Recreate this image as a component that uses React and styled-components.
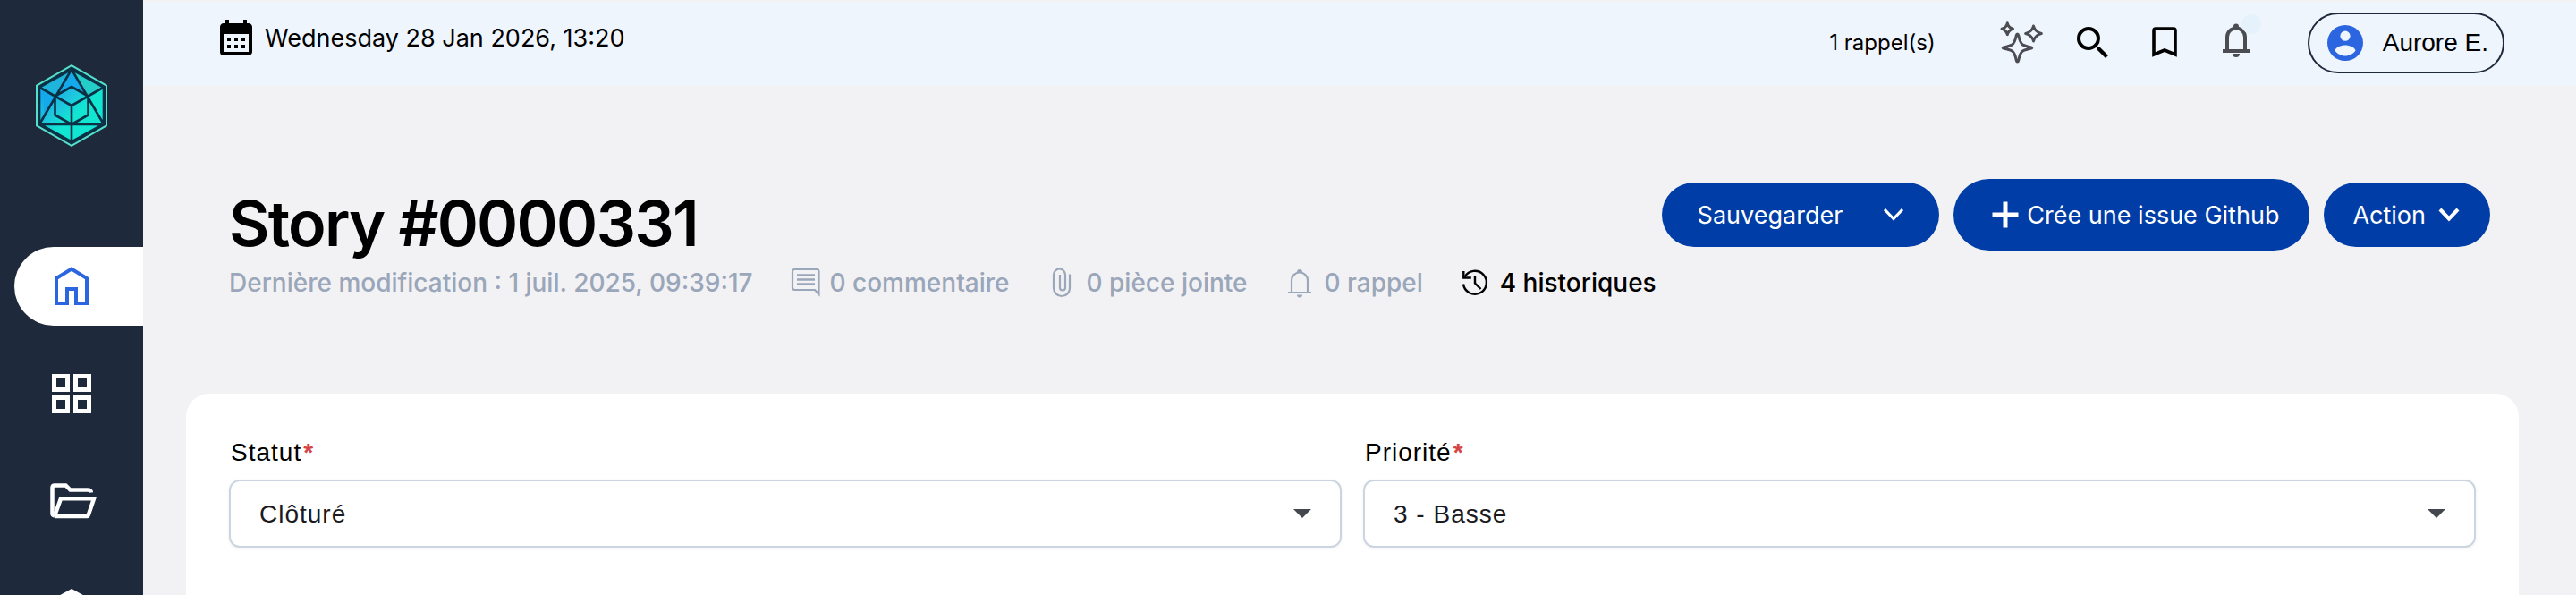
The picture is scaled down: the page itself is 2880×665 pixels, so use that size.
import React from "react";
import styled, { createGlobalStyle } from "styled-components";

const sans = '"Inter", "Liberation Sans", sans-serif';
const helvetica = '"Liberation Sans", Arial, sans-serif';

const GlobalStyle = createGlobalStyle`
  *, *::before, *::after { box-sizing: border-box; }
  body { margin: 0; background: #f2f2f4; color: #000; font-family: ${sans}; font-size: 27px; }
  button, select { font: inherit; color: inherit; letter-spacing: inherit; }
  svg { display: block; flex: none; }
`;

const Shell = styled.div`
  display: flex;
  height: 100vh;
  overflow: hidden;
`;

const Sidebar = styled.aside`
  flex: none;
  width: 160px;
  background: #1e293b;
`;

const LogoLink = styled.a`
  display: flex;
  justify-content: center;
  padding: 72px 0 112px;
`;

const Nav = styled.nav`
  display: flex;
  flex-direction: column;
  gap: 32px;
  padding-left: 16px;
`;

const NavLink = styled.a`
  display: flex;
  flex: none;
  align-items: center;
  height: 88px;
  padding-left: 36px;
  border-radius: 44px 0 0 44px;
  background: ${(p) => (p.$active ? "#fff" : "transparent")};
  color: ${(p) => (p.$active ? "#2b65e0" : "#fff")};
`;

const Page = styled.div`
  display: flex;
  flex: 1;
  flex-direction: column;
  min-width: 0;
`;

const TopBar = styled.header`
  display: flex;
  justify-content: space-between;
  align-items: flex-start;
  padding: 12px 80px 14px;
  border-top: 2px solid #f2f2f4;
  background: #eff5fd;
`;

const DateBox = styled.div`
  display: flex;
  align-items: center;
  gap: 8px;
  padding-top: 4px;
`;

const Tools = styled.div`
  display: flex;
  align-items: center;
`;

const Reminder = styled.span`
  margin-right: 72px;
  font-size: 24px;
  line-height: 32px;
`;

const ToolRow = styled.div`
  display: flex;
  gap: 32px;
  margin-right: 56px;
`;

const IconButton = styled.button`
  position: relative;
  padding: 0;
  border: 0;
  background: none;
  color: ${(p) => (p.$soft ? "#4b4d52" : "#000")};
`;

const Badge = styled.span`
  position: absolute;
  top: -8px;
  right: -4px;
  width: 22px;
  height: 22px;
  border-radius: 50%;
  background: #e5f2fb;
`;

const UserButton = styled.button`
  display: flex;
  align-items: center;
  gap: 18px;
  height: 68px;
  padding: 0 16px;
  border: 2px solid #1e293b;
  border-radius: 34px;
  background: none;
  font-family: ${helvetica};
  font-size: 28px;
  white-space: nowrap;
`;

const UserIcon = styled.span`
  color: #2b65e0;
`;

const Main = styled.main`
  display: flex;
  flex: 1;
  flex-direction: column;
  padding: 104px 64px 0 48px;
`;

const Heading = styled.div`
  display: flex;
  justify-content: space-between;
  align-items: flex-start;
  padding: 0 32px 0 48px;
`;

const TitleBlock = styled.div`
  display: flex;
  flex-direction: column;
  gap: 6px;
  padding-top: 10px;
`;

const Title = styled.h1`
  margin: 0;
  font-size: 70px;
  font-weight: 600;
  line-height: 80px;
  letter-spacing: -0.025em;
`;

const MetaRow = styled.div`
  display: flex;
  align-items: center;
  gap: 38px;
  color: #9aa6b9;
  font-size: 28px;
  font-weight: 500;
  line-height: 40px;
  white-space: nowrap;
`;

const MetaItem = styled.span`
  display: flex;
  align-items: center;
  gap: 8px;
  color: ${(p) => (p.$strong ? "#000" : "inherit")};
`;

const Actions = styled.div`
  display: flex;
  align-items: center;
  gap: 16px;
`;

const PillButton = styled.button`
  display: flex;
  align-items: center;
  gap: ${(p) => p.$gap}px;
  height: ${(p) => (p.$large ? 80 : 72)}px;
  padding: 0 ${(p) => p.$pad}px;
  border: 0;
  border-radius: 40px;
  background: #003da6;
  color: #fff;
  white-space: nowrap;
`;

const Card = styled.section`
  display: grid;
  flex: 1;
  grid-template-columns: 1fr 1fr;
  align-items: start;
  gap: 24px;
  margin-top: 104px;
  padding: 48px;
  border-radius: 26px 26px 0 0;
  background: #fff;
`;

const Field = styled.div`
  display: grid;
  gap: 12px;
  font-family: ${helvetica};
  font-size: 28px;
  letter-spacing: 1px;
`;

const Label = styled.label`
  padding-left: 2px;
  line-height: 36px;
`;

const Required = styled.span`
  margin-left: 2px;
  color: #d64545;
  font-weight: 700;
  line-height: 24px;
`;

const SelectBox = styled.div`
  display: grid;
  align-items: center;
  > * { grid-area: 1 / 1; }
  > svg { justify-self: end; margin-right: 34px; color: #44474e; pointer-events: none; }
`;

const Select = styled.select`
  width: 100%;
  height: 76px;
  padding: 0 32px;
  border: 2px solid #cbd5e1;
  border-radius: 12px;
  background: #fff;
  box-shadow: 0 1px 4px rgb(0 0 0 / 6%);
  color: #1b1b1f;
  appearance: none;
`;

const Glyph = ({ size = 48, children, box = 48 }) => (
  <svg width={size} height={size} viewBox={`0 0 ${box} ${box}`} fill="none" stroke="currentColor" aria-hidden="true">
    {children}
  </svg>
);

const Solid = ({ size = 48, d }) => (
  <svg width={size} height={size} viewBox="0 0 24 24" fill="currentColor" aria-hidden="true">
    <path d={d} />
  </svg>
);

const Logo = () => (
  <svg width="80" height="92" viewBox="0 0 80 92" fill="none" aria-hidden="true">
    <defs>
      <linearGradient id="gem" x1="14" y1="20" x2="56" y2="66" gradientUnits="userSpaceOnUse">
        <stop offset="0.1" stopColor="#14a9ea" />
        <stop offset="0.45" stopColor="#1fc4de" />
        <stop offset="0.75" stopColor="#12e6d3" />
      </linearGradient>
    </defs>
    <path d="M40 1.2 79 23.7v44.6L40 90.8 1 68.3V23.7z" fill="#0f3145" stroke="#56e0cb" strokeWidth="2" />
    <path d="M40 6 75 26v40L40 86 5 66V26z" fill="url(#gem)" />
    <path d="M40 6 5 26l17 10z" fill="#1fb4dc" />
    <path d="M40 6l35 20-17 10z" fill="#25cdc9" />
    <path d="M40 10 22 35 40 25l18 10z" fill="#14a9ea" />
    <path d="M9 30v30l13-24z" fill="#14a9ea" />
    <path
      d="M40 5.500 76 25.500v41L40 86.500 4 66.500v-41zM40 5.500 4 67h72zM4 25.500 40 46l36-20.500M40 46v40M40 25 58.500 35.500v21L40 67 21.500 56.500v-21z"
      stroke="#0b3146"
      strokeWidth="2.600"
      strokeLinejoin="round"
    />
  </svg>
);

const HomeIcon = () => (
  <Glyph size={56} box={56}>
    <path d="M11 19 28 8.500 45 19v28H33V31H23v16H11z" strokeWidth="4" />
  </Glyph>
);

const GridIcon = () => (
  <Glyph size={56} box={56}>
    <path d="M8.500 8.500h15v15h-15zM32.500 8.500h15v15h-15zM8.500 32.500h15v15h-15zM32.500 32.500h15v15h-15z" strokeWidth="5" />
  </Glyph>
);

const FolderIcon = () => (
  <Glyph size={56} box={56}>
    <path d="M9 44.500q-2.500-.5-2.500-2.500V13q0-2.500 2.500-2.500h12.500l5 5H46q3.500 0 4 3" strokeWidth="4.500" />
    <path d="M9 44.800 16 25.300h37L47 43q-.6 2-2.500 2H9" strokeWidth="4.500" />
  </Glyph>
);

const CubeIcon = () => (
  <Glyph size={56} box={56}>
    <path d="M28 8.500 46 18.500v19L28 47.500 10 37.500v-19zM28 10v18M10 18.500 28 28l18-9.500" strokeWidth="4.500" />
  </Glyph>
);

const BellIcon = () => (
  <Glyph>
    <path d="M9 33h30M14 33V17.500a10 10 0 0 1 20 0V33" strokeWidth="4" />
    <path d="M21 5.500a3 3 0 0 1 6 0l.5 1.500h-7zM20 36h8a4 4 0 0 1-8 0z" fill="currentColor" stroke="none" />
  </Glyph>
);

const SmallBellIcon = () => (
  <Glyph size={40} box={40}>
    <path d="M7 31h26M11 31V17.500a9 9 0 0 1 18 0V31" strokeWidth="2.200" />
    <path d="M17 8a3 3 0 0 1 6 0zM17 33.500h6a3 3 0 0 1-6 0z" fill="currentColor" stroke="none" />
  </Glyph>
);

const SparklesIcon = () => (
  <Glyph>
    <path
      d="M19.500 14q.8 0 1.200 1.500 1.700 8.500 5 10.700 2.500 1.300 9.300 2.800 1.500.5 0 1-6.800 1.500-9.300 2.800-3.300 2.200-5 10.700-.4 1.500-1.200 1.500t-1.200-1.500q-1.700-8.500-5-10.700Q10.800 31.500 4 30q-1.500-.5 0-1 6.800-1.500 9.300-2.800 3.300-2.200 5-10.700.4-1.500 1.200-1.500z"
      strokeWidth="3"
      strokeLinejoin="round"
    />
    <path d="M8.300 1.800q1.200 5 6.200 6.400-5 1.400-6.200 6.400Q7.100 9.600 2.100 8.200q5-1.400 6.200-6.400zM37.500 5q1.600 6.600 8.800 8.500-7.200 1.900-8.800 8.500-1.600-6.600-8.800-8.500 7.200-1.900 8.800-8.500z" strokeWidth="3" strokeLinejoin="round" />
  </Glyph>
);

const BookmarkIcon = () => (
  <Glyph>
    <path d="M12 37V10q0-2 2-2h20q2 0 2 2v27l-12-5z" strokeWidth="3.600" />
  </Glyph>
);

const CommentIcon = () => (
  <Glyph size={40} box={40}>
    <path d="M35.500 33V7.500Q35.500 5 33 5H8.500Q6 5 6 7.500v18Q6 28 8.500 28H31z" strokeWidth="2.200" />
    <path d="M11 11.500h20M11 16.500h20M11 21.500h20" strokeWidth="2.400" />
  </Glyph>
);

const ClipIcon = () => (
  <Glyph size={40} box={40}>
    <path d="M18 11v14.500a3 3 0 0 0 6 0V11a6.500 6.500 0 0 0-13 0v15a9 9 0 0 0 18 0V10.500" strokeWidth="2.200" />
  </Glyph>
);

const HistoryIcon = () => (
  <Glyph size={40} box={40}>
    <path d="M7 21.500A13 13 0 1 0 8.500 13.500" strokeWidth="2.400" />
    <path d="M7.300 7v7.500h8.500M20 12.500v8l6.500 6.500" strokeWidth="2.400" />
  </Glyph>
);

const Chevron = ({ width, inset = 1, stroke }) => (
  <svg width={width} height="16" viewBox={`0 0 ${width} 16`} fill="none" stroke="currentColor" strokeWidth={stroke} aria-hidden="true">
    <path d={`M${inset} 2 ${width / 2} 12.500 ${width - inset} 2`} />
  </svg>
);

const Caret = () => (
  <svg width="20" height="10" viewBox="0 0 20 10" fill="currentColor" aria-hidden="true">
    <path d="M0 0h20L10 10z" />
  </svg>
);

const CALENDAR =
  "M19 4h-1V2h-2v2H8V2H6v2H5c-1.110 0-1.990.9-1.990 2L3 20a2 2 0 0 0 2 2h14c1.100 0 2-.9 2-2V6c0-1.100-.9-2-2-2zm0 16H5V10h14v10zM9 14H7v-2h2v2zm4 0h-2v-2h2v2zm4 0h-2v-2h2v2zm-8 4H7v-2h2v2zm4 0h-2v-2h2v2zm4 0h-2v-2h2v2z";
const SEARCH =
  "M15.500 14h-.79l-.28-.27A6.471 6.471 0 0 0 16 9.500 6.500 6.500 0 1 0 9.500 16c1.610 0 3.090-.59 4.230-1.570l.27.28v.79l5 4.990L20.490 19l-4.990-5zm-6 0C7.010 14 5 11.990 5 9.500S7.010 5 9.500 5 14 7.010 14 9.500 11.990 14 9.500 14z";
const ACCOUNT =
  "M12 2a10 10 0 1 0 0 20 10 10 0 0 0 0-20zM12 5.300a2.800 2.800 0 1 1 0 5.600 2.800 2.800 0 0 1 0-5.600zM12 19.200c-2.400 0-4.500-1.200-5.800-3 .5-1.900 3.300-3 5.800-3s5.300 1.100 5.800 3c-1.300 1.800-3.400 3-5.800 3z";

const SelectField = ({ id, label, value }) => (
  <Field>
    <Label htmlFor={id}>
      {label}
      <Required>*</Required>
    </Label>
    <SelectBox>
      <Select id={id} defaultValue={value} required>
        <option>{value}</option>
      </Select>
      <Caret />
    </SelectBox>
  </Field>
);

export default function App() {
  return (
    <Shell>
      <GlobalStyle />
      <Sidebar>
        <LogoLink href="#" aria-label="Logo">
          <Logo />
        </LogoLink>
        <Nav>
          <NavLink href="#" $active aria-label="Accueil"><HomeIcon /></NavLink>
          <NavLink href="#" aria-label="Tableaux"><GridIcon /></NavLink>
          <NavLink href="#" aria-label="Dossiers"><FolderIcon /></NavLink>
          <NavLink href="#" aria-label="Modules"><CubeIcon /></NavLink>
        </Nav>
      </Sidebar>
      <Page>
        <TopBar>
          <DateBox>
            <Solid d={CALENDAR} />
            <time dateTime="2026-01-28T13:20">Wednesday 28 Jan 2026, 13:20</time>
          </DateBox>
          <Tools>
            <Reminder>1 rappel(s)</Reminder>
            <ToolRow>
              <IconButton $soft aria-label="Assistant"><SparklesIcon /></IconButton>
              <IconButton aria-label="Rechercher"><Solid d={SEARCH} /></IconButton>
              <IconButton aria-label="Favoris"><BookmarkIcon /></IconButton>
              <IconButton $soft aria-label="Notifications">
                <Badge />
                <BellIcon />
              </IconButton>
            </ToolRow>
            <UserButton>
              <UserIcon><Solid d={ACCOUNT} /></UserIcon>
              Aurore E.
            </UserButton>
          </Tools>
        </TopBar>
        <Main>
          <Heading>
            <TitleBlock>
              <Title>Story #0000331</Title>
              <MetaRow>
                <span>Dernière modification : 1 juil. 2025, 09:39:17</span>
                <MetaItem><CommentIcon />0 commentaire</MetaItem>
                <MetaItem><ClipIcon />0 pièce jointe</MetaItem>
                <MetaItem><SmallBellIcon />0 rappel</MetaItem>
                <MetaItem $strong><HistoryIcon />4 historiques</MetaItem>
              </MetaRow>
            </TitleBlock>
            <Actions>
              <PillButton $pad={40} $gap={46}>
                Sauvegarder
                <Chevron width={22} stroke={3} />
              </PillButton>
              <PillButton $large $pad={34} $gap={0}>
                <Glyph><path d="M24 9.500v29M9.500 24h29" strokeWidth="5" /></Glyph>
                Crée une issue Github
              </PillButton>
              <PillButton $pad={32} $gap={12}>
                Action
                <Chevron width={28} inset={4} stroke={4} />
              </PillButton>
            </Actions>
          </Heading>
          <Card>
            <SelectField id="statut" label="Statut" value="Clôturé" />
            <SelectField id="priorite" label="Priorité" value="3 - Basse" />
          </Card>
        </Main>
      </Page>
    </Shell>
  );
}
